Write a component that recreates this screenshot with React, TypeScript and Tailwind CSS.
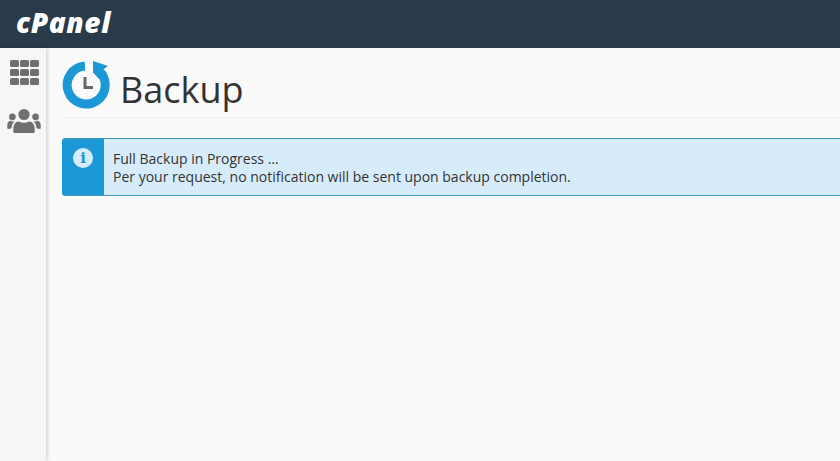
function GridIcon() {
  const cells = [0, 1, 2, 3, 4, 5, 6, 7, 8];
  return (
    <div className="grid grid-cols-3 gap-x-[1px] gap-y-[2px] w-[29px]">
      {cells.map((c) => (
        <div key={c} className="h-[7px] rounded-[1.5px] bg-[#6f6f6f]" />
      ))}
    </div>
  );
}

function UsersIcon() {
  return (
    <svg width="36" height="26" viewBox="0 0 36 28" fill="#6f6f6f">
      <circle cx="18" cy="7" r="6" />
      <circle cx="5.5" cy="9.5" r="3.6" />
      <circle cx="30.5" cy="9.5" r="3.6" />
      <path d="M8 27c-1 0-1.500-.7-1.500-1.500V22c0-5 3-7.500 6-7.500 1.500 1 3.500 1.500 5.500 1.500s4-.5 5.500-1.500c3 0 6 2.500 6 7.500v3.500c0 .8-.5 1.500-1.500 1.500z" />
      <path d="M1 22.500c-.6 0-1-.4-1-1v-3c0-3 1.800-4.800 3.500-4.800.8.5 1.800.8 2.800.8.500 0 1-.1 1.500-.2-1.600 1.500-3 3.700-3.200 7.200-.8.600-2.400 1-3.600 1z" />
      <path d="M35 22.500c.6 0 1-.4 1-1v-3c0-3-1.800-4.800-3.500-4.800-.8.500-1.800.8-2.800.8-.5 0-1-.1-1.500-.2 1.600 1.500 3 3.700 3.200 7.200.8.600 2.400 1 3.600 1z" />
    </svg>
  );
}

function BackupIcon() {
  return (
    <svg width="48" height="50" viewBox="0 0 48 50" fill="none">
      <path d="M23 7A19 19 0 1 0 36.500 11.500" stroke="#1b98d5" strokeWidth="9" />
      <path d="M31 2l15 5-5.500 4-3 9.500-6.500-7z" fill="#1b98d5" />
      <path d="M23 18v10.500h8" stroke="#666666" strokeWidth="3" />
    </svg>
  );
}

export default function App() {
  return (
    <div className="h-[461px] w-[840px] overflow-hidden flex flex-col bg-[#fafafa] text-[#333333] font-['Open_Sans',sans-serif]">
      <header className="h-[48px] shrink-0 bg-[#293a4a] flex items-center pl-[16px] pb-[5px]">
        <span className="text-white text-[28px] leading-none font-extrabold italic font-['Open_Sans',sans-serif] tracking-[0.6px]">cPanel</span>
      </header>
      <div className="flex flex-1 min-h-0">
        <aside className="w-[46px] shrink-0 bg-[#f6f6f6] shadow-[1px_0_4px_rgba(0,0,0,0.2)] flex flex-col items-center pt-[12px] pl-[2px] gap-[23px]">
          <GridIcon />
          <UsersIcon />
        </aside>
        <main className="flex-1 min-w-0 pl-[16px] pt-[11px]">
          <div className="flex items-start gap-[10px] h-[59px] border-b border-[#eeeeee]">
            <BackupIcon />
            <h1 className="text-[36px] leading-none font-normal text-[#333333] pt-[13px]">Backup</h1>
          </div>
          <div className="mt-[20px] -mr-[4px] flex h-[58px] rounded-l-[3px] border-y border-[#3f97b5] bg-[#d7ecfa] overflow-hidden">
            <div className="w-[42px] shrink-0 bg-[#1b98d5] flex justify-center pt-[9px]">
              <div className="w-[20px] h-[20px] rounded-full bg-[#d7ecfa] flex items-center justify-center text-[#1b98d5] text-[15px] leading-none font-bold font-['DejaVu_Serif',serif]">i</div>
            </div>
            <div className="pl-[9px] pt-[11px] text-[14px] leading-[18px] text-[#333333]">
              <div>Full Backup in Progress …</div>
              <div>Per your request, no notification will be sent upon backup completion.</div>
            </div>
          </div>
        </main>
      </div>
    </div>
  );
}
